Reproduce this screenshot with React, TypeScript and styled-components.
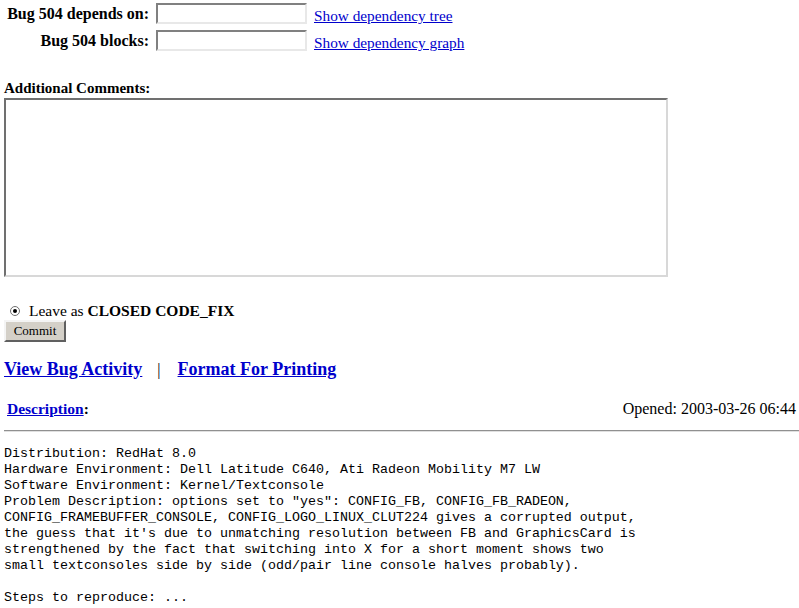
import React from "react";
import styled, { createGlobalStyle } from "styled-components";

const Global = createGlobalStyle`
  html, body { margin: 0; padding: 0; background: #fff; }
  body { font-family: "Liberation Serif", "Times New Roman", serif; font-size: 16px; color: #000; }
`;

const Page = styled.div`
  padding: 3px 4px 0 4px;
`;

const DepTable = styled.div`
  display: grid;
  grid-template-columns: 145px 151px auto;
  column-gap: 7px;
  row-gap: 5px;
  align-items: start;
  width: max-content;
`;

const DepLabel = styled.label`
  font-weight: bold;
  text-align: right;
  padding-top: 2px;
  font-size: 16px;
  white-space: nowrap;
`;

const DepInput = styled.input`
  box-sizing: border-box;
  width: 151px;
  height: 21px;
  border: 2px solid;
  border-color: #808080 #e8e8e8 #e8e8e8 #808080;
  margin: 0;
  padding: 1px 2px;
`;

const Link = styled.a`
  color: #0000cc;
  text-decoration: underline;
`;

const DepLink = styled(Link)`
  font-size: 15.3px;
  padding-top: 4px;
  display: inline-block;
`;

const CommentsLabel = styled.div`
  font-weight: bold;
  margin-top: 28px;
  font-size: 15px;
`;

const Comments = styled.textarea`
  box-sizing: border-box;
  display: block;
  width: 664px;
  height: 179px;
  margin-top: 1px;
  border: 2px solid;
  border-color: #707070 #d8d8d8 #d8d8d8 #707070;
  resize: none;
`;

const RadioRow = styled.div`
  display: flex;
  align-items: center;
  margin-top: 25px;
  padding-left: 6px;
  font-size: 15.5px;
  gap: 9px;
`;

const Radio = styled.span`
  width: 10px;
  height: 10px;
  border-radius: 50%;
  border: 1px solid #707070;
  box-sizing: border-box;
  display: flex;
  align-items: center;
  justify-content: center;
  &::after {
    content: "";
    width: 4px;
    height: 4px;
    border-radius: 50%;
    background: #000;
  }
`;

const CommitButton = styled.button`
  display: block;
  box-sizing: border-box;
  width: 62px;
  height: 22px;
  margin-top: 0;
  font-family: "Liberation Serif", "Times New Roman", serif;
  font-size: 13px;
  background: #d4d0c8;
  border: 2px solid;
  border-color: #f4f4f4 #606060 #606060 #f4f4f4;
  padding: 0;
`;

const ActionRow = styled.div`
  display: flex;
  align-items: baseline;
  margin-top: 17px;
  font-size: 18px;
  font-weight: bold;
`;

const Sep = styled.span`
  font-weight: normal;
  font-size: 16px;
  color: #000;
  margin: 0 17px 0 15px;
`;

const DescHeader = styled.div`
  display: flex;
  justify-content: space-between;
  align-items: baseline;
  margin-top: 20px;
  padding-left: 3px;
`;

const DescTitle = styled.span`
  font-weight: bold;
  font-size: 15.5px;
`;

const Opened = styled.span`
  font-size: 16px;
  margin-right: -1px;
`;

const Rule = styled.hr`
  margin: 12px -4px 0 0;
  border: 0;
  border-top: 1px solid #909090;
  border-bottom: 1px solid #e0e0e0;
`;

const Pre = styled.pre`
  font-family: "Liberation Mono", "Courier New", monospace;
  font-size: 13.33px;
  line-height: 16px;
  margin: 14px 0 0 0;
`;

const text = `Distribution: RedHat 8.0
Hardware Environment: Dell Latitude C640, Ati Radeon Mobility M7 LW
Software Environment: Kernel/Textconsole
Problem Description: options set to "yes": CONFIG_FB, CONFIG_FB_RADEON,
CONFIG_FRAMEBUFFER_CONSOLE, CONFIG_LOGO_LINUX_CLUT224 gives a corrupted output,
the guess that it's due to unmatching resolution between FB and GraphicsCard is
strengthened by the fact that switching into X for a short moment shows two
small textconsoles side by side (odd/pair line console halves probably).

Steps to reproduce: ...`;

export default function App() {
  return (
    <Page>
      <Global />
      <DepTable>
        <DepLabel>Bug 504 depends on:</DepLabel>
        <DepInput />
        <DepLink href="#">Show dependency tree</DepLink>
        <DepLabel>Bug 504 blocks:</DepLabel>
        <DepInput />
        <DepLink href="#">Show dependency graph</DepLink>
      </DepTable>
      <CommentsLabel>Additional Comments:</CommentsLabel>
      <Comments />
      <RadioRow>
        <Radio />
        <span>
          Leave as <b>CLOSED CODE_FIX</b>
        </span>
      </RadioRow>
      <CommitButton>Commit</CommitButton>
      <ActionRow>
        <Link href="#">View Bug Activity</Link>
        <Sep>|</Sep>
        <Link href="#">Format For Printing</Link>
      </ActionRow>
      <DescHeader>
        <DescTitle>
          <Link href="#">Description</Link>:
        </DescTitle>
        <Opened>Opened: 2003-03-26 06:44</Opened>
      </DescHeader>
      <Rule />
      <Pre>{text}</Pre>
    </Page>
  );
}
